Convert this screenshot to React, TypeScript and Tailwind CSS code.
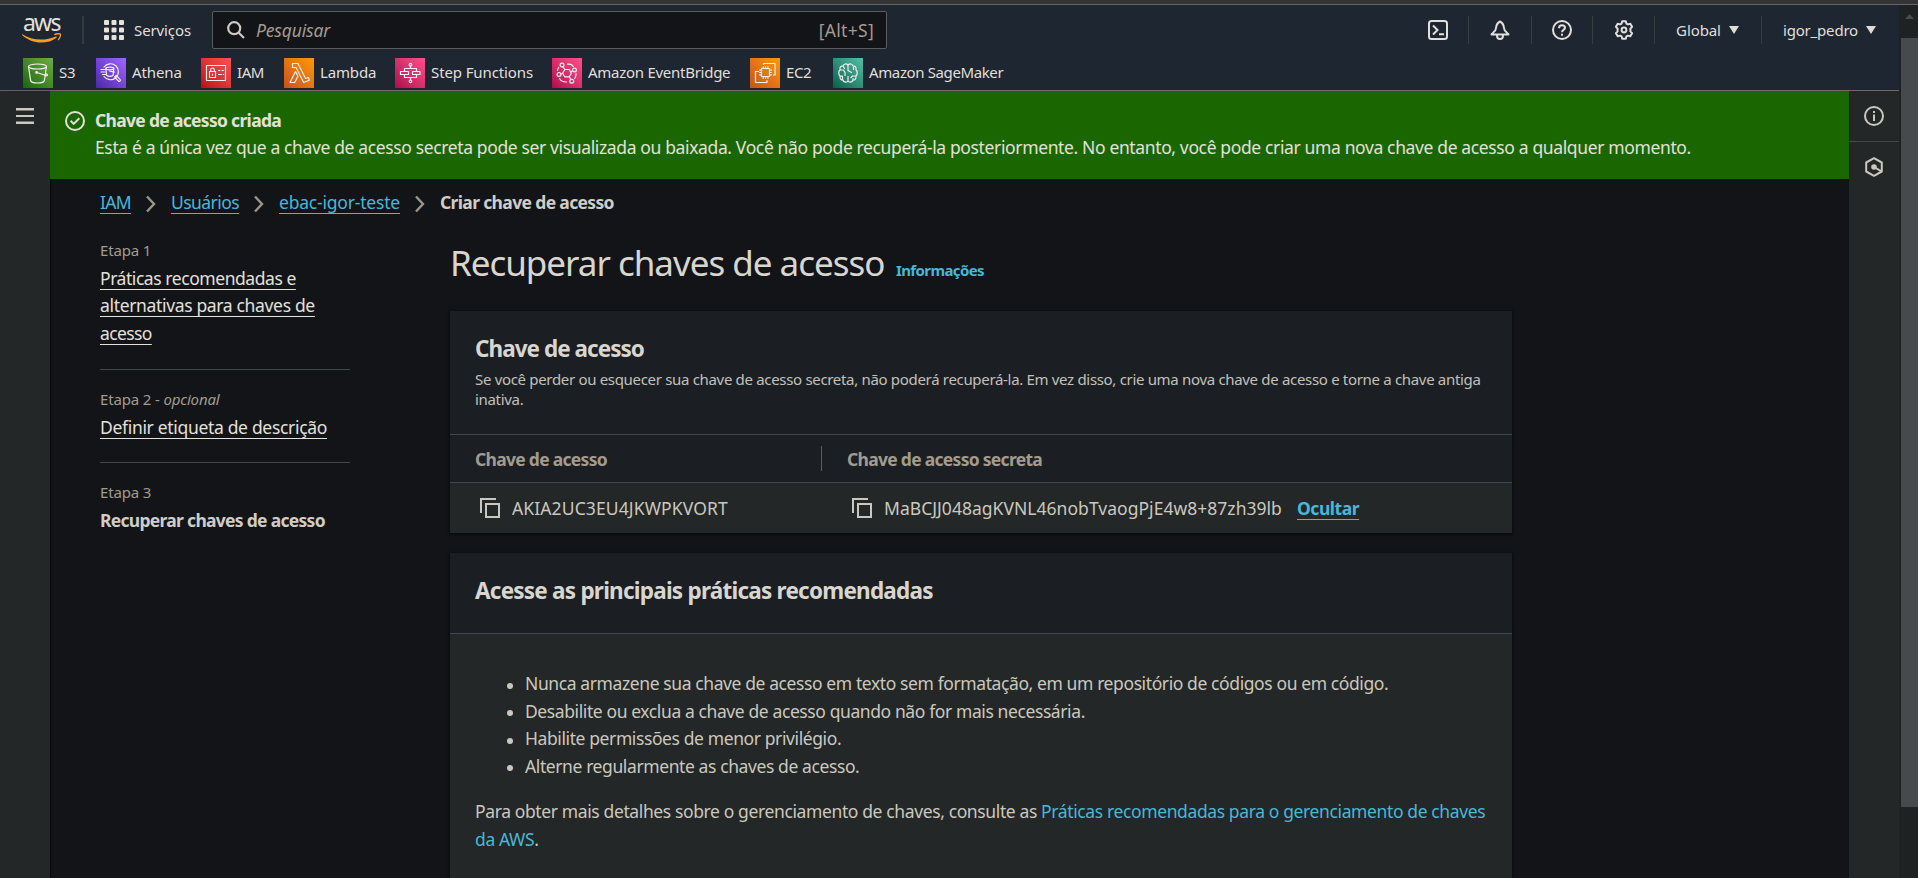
import type { ReactNode } from "react";

const outline = {
  fill: "none",
  stroke: "currentColor",
  strokeWidth: 1.2,
  strokeLinejoin: "round",
  strokeLinecap: "round",
} as const;

function AwsLogo() {
  return (
    <div className="flex h-[26px] w-10 shrink-0 flex-col">
      <span className="h-4 pl-px text-[23px] leading-[11px] tracking-[-1.8px] text-[#e4e1dc]">aws</span>
      <svg width="40" height="10" viewBox="0 0 40 10" className="shrink-0 text-[#ff9d1e]">
        <path d="M.3 1.300C5.500 4.600 12 6.600 18.800 6.600c5.200 0 10.500-1.100 15-3.100.9-.3 1.500.6.700 1.200C30.600 7.900 24.700 9.600 19.300 9.600 12 9.600 5.500 6.900.3 2.300c-.5-.6-.3-1.200 0-1z" fill="currentColor" />
        <path d="M32.200 1.700c2.200-1.200 5.800-1.100 6.200-.6.400.8-.4 4-2.300 5.900" fill="none" stroke="currentColor" strokeWidth="1.300" />
      </svg>
    </div>
  );
}

function GridIcon() {
  const p = [0, 7.5, 15];
  return (
    <svg width="20" height="20" viewBox="0 0 20 20" className="shrink-0 text-[#e6e2dc]">
      {p.map((y) => p.map((x) => <rect key={`${x}-${y}`} x={x} y={y} width="5" height="5" rx="1" fill="currentColor" />))}
    </svg>
  );
}

function Caret() {
  return (
    <svg width="10" height="8" viewBox="0 0 10 8" className="shrink-0 text-[#e0ddd7]">
      <path d="M0 0h10L5 8z" fill="currentColor" />
    </svg>
  );
}

function ServiceIcon({ bg, children }: { bg: string; children: ReactNode }) {
  return (
    <span className={`flex size-[30px] shrink-0 items-center justify-center text-[#f2efee] ${bg}`}>
      <svg width="30" height="30" viewBox="0 0 30 30" {...outline}>
        {children}
      </svg>
    </span>
  );
}

const favorites = [
  {
    name: "S3",
    box: "w-[73px]",
    text: "tracking-[-0.3px]",
    bg: "bg-linear-to-tr from-[#1b660f] to-[#6cae3e]",
    icon: (
      <>
        <ellipse cx="14.500" cy="8.500" rx="9" ry="2.500" />
        <path d="M5.500 8.500l2.200 14.300c.4 1.300 3 2.200 6.800 2.200s6.400-.9 6.800-2.200L23.500 8.500M14 14.500l9.500 3.300c1.800-.5 1-1.600-.900-2.600" />
        <circle cx="13.600" cy="14.400" r=".8" fill="currentColor" />
      </>
    ),
  },
  {
    name: "Athena",
    box: "w-[105px]",
    text: "tracking-[-0.1px]",
    bg: "bg-linear-to-tr from-[#4d27a8] to-[#a166ff]",
    icon: (
      <>
        <path d="M8 9a8 8 0 1 1 0 9.500M5 11.500h4M5 14h4M6.500 16.500h4" />
        <ellipse cx="13.800" cy="10.500" rx="4" ry="1.300" />
        <path d="M9.800 10.500l.8 6.800c1.500 1.400 5 1.400 6.500 0l.7-6.800M13.500 13l4.800 1.200M18.600 19l1.600-1.600 4 4.200c.7.700-.8 2.400-1.700 1.600z" />
      </>
    ),
  },
  {
    name: "IAM",
    box: "w-[83px]",
    text: "tracking-[-0.4px]",
    bg: "bg-linear-to-tr from-[#bd0816] to-[#ff5252]",
    icon: (
      <path d="M5.500 7.500h19v15h-19zM8.500 13.500h6v6h-6zM9.700 13.500v-1.700a1.800 1.800 0 0 1 3.600 0v1.700M11.500 16v1.200M17.500 12.500h1.500M21 12.500h1.500M17.500 16.500h3M22.300 16.500h.2" />
    ),
  },
  {
    name: "Lambda",
    box: "w-[111px]",
    text: "tracking-[-0.15px]",
    bg: "bg-linear-to-tr from-[#c8511b] to-[#ff9900]",
    icon: <path d="M8.500 5.500h5.500l7.500 15 3-1 .8 2.700-5.600 2.300L12 9.500H8.500zM11.500 13.500l2.400 4.700-3.200 6.300H6z" />,
  },
  {
    name: "Step Functions",
    box: "w-[157px]",
    text: "tracking-[-0.11px]",
    bg: "bg-linear-to-tr from-[#b0084d] to-[#ff4f8b]",
    icon: (
      <>
        <circle cx="15.500" cy="6.700" r="1.300" />
        <circle cx="15.500" cy="23.300" r="1.300" />
        <path d="M15.500 8v2.300M15.500 19.700V22M9.500 13.500v-3h12v3M9.500 16.500v3h12v-3M5.500 13.500h8v3h-8zM17.500 13.500h7.500v3h-7.500z" />
      </>
    ),
  },
  {
    name: "Amazon EventBridge",
    box: "w-[198px]",
    text: "tracking-[-0.27px]",
    bg: "bg-linear-to-tr from-[#b0084d] to-[#ff4f8b]",
    icon: (
      <>
        <path d="M12.800 11.500h4.400l2.200 3.700-2.200 3.700h-4.400l-2.200-3.700z" />
        <circle cx="10" cy="7" r="1.900" />
        <circle cx="22.500" cy="12" r="1.900" />
        <circle cx="7" cy="16.500" r="1.900" />
        <circle cx="19.800" cy="23.300" r="1.900" />
        <path d="M11 8.700l1.700 2.700M20.600 12.800l-1.500 1M9 16l1.300-.5M18.900 21.600l-1.500-2.600M15.500 6.200c2.500-.4 5 .6 6 2.600M6.700 9.500c-.8 1-1.200 2-1.200 3M7.500 20.500c1.300 2.500 4 3.500 7 3.500M24 15.500c.2 1.800-.4 3.500-1.300 5" />
      </>
    ),
  },
  {
    name: "EC2",
    box: "w-[83px]",
    text: "tracking-[-0.4px]",
    bg: "bg-linear-to-tr from-[#c8511b] to-[#ff9900]",
    icon: (
      <path d="M11.500 10.500h8v8h-8zM13.200 8.700v1.500M15.500 8.700v1.500M17.800 8.700v1.500M13.200 19v1.500M15.500 19v1.500M17.800 19v1.500M9.700 12.200h1.500M9.700 14.500h1.500M9.700 16.800h1.500M20 12.200h1.500M20 14.500h1.500M20 16.800h1.500M13.500 6.500v-1h11.500v11.500h-1.500M8.500 13.500h-3v11h11.500V22.500" />
    ),
  },
  {
    name: "Amazon SageMaker",
    box: "w-[180px]",
    text: "tracking-[-0.38px]",
    bg: "bg-linear-to-tr from-[#055f4e] to-[#56c0a7]",
    icon: (
      <path d="M15 7.200c-1.500-1.900-4.300-1.500-4.900.6-2.300-.1-3.700 1.900-3 4-1.800 1.600-1.800 4.800 0 6.400-.5 2.200.9 4 3 4 .7 2.200 3.500 2.700 4.900.8 1.400 1.900 4.200 1.400 4.900-.8 2.100 0 3.500-1.800 3-4 1.800-1.600 1.800-4.800 0-6.400.7-2.100-.7-4.100-3-4-.6-2.100-3.400-2.500-4.900-.6zM15 7.200v5.300l3.500 2M15 23v-4.500M10 8l1.500 2.500M7 12h3.500l1.500 2.500v3M7 18.200h2.500v3M20.500 9v2.500M23 18h-3.500l-1.500 1.500M20 22v-1.500" />
    ),
  },
];

function NavDivider({ className }: { className: string }) {
  return <span className={`h-7 w-px shrink-0 bg-[#353c42] ${className}`} />;
}

function Header() {
  return (
    <header className="h-[86px] shrink-0 border-b border-[#6f6a68] bg-[#1d2631] text-[15px] leading-5 text-[#e2dfda]">
      <div className="flex h-[50px] items-center pl-[22px]">
        <AwsLogo />
        <span className="ml-5 h-7 w-0.5 shrink-0 bg-[#353a40]" />
        <button className="ml-5 flex items-center gap-2.5">
          <GridIcon />
          <span className="w-[57px] tracking-[-0.11px]">Serviços</span>
        </button>
        <div className="ml-[21px] flex h-[38px] w-[675px] shrink-0 items-center rounded-[2px] border border-[#5b5c5e] bg-[#131418] pr-3 pl-3.5">
          <svg width="18" height="18" viewBox="0 0 18 18" fill="none" stroke="currentColor" strokeWidth="2.200" className="text-[#cdc9c2]">
            <circle cx="7.200" cy="7.200" r="6" />
            <path d="M11.500 11.500l5.500 5.500" />
          </svg>
          <span className="ml-[11px] pb-px text-[17.5px] tracking-[-0.16px] text-[#a39b8d] italic">Pesquisar</span>
          <span className="ml-auto pb-px text-[17.5px] tracking-[0.3px] text-[#a39b8d]">[Alt+S]</span>
        </div>
        <svg width="20" height="20" viewBox="0 0 20 20" fill="none" stroke="currentColor" strokeWidth="2" className="ml-[541px] shrink-0">
          <rect x="1" y="1" width="18" height="18" rx="2.500" />
          <path d="M5 5.500l4.500 4.500L5 14.500M11 14.200h5" />
        </svg>
        <NavDivider className="ml-5" />
        <svg width="20" height="20" viewBox="0 0 20 20" fill="none" stroke="currentColor" strokeWidth="2" strokeLinejoin="round" className="ml-[21px] shrink-0">
          <path d="M10 1.500C7.400 2.800 6.300 5 6 8c-.2 2.200-1 3.200-2.500 4.300L1.500 14.500h17l-2-2.200C15 11.200 14.200 10.200 14 8c-.3-3-1.400-5.200-4-6.500zM7 14.800v1c0 1.800 1.300 3.200 3 3.200s3-1.400 3-3.200v-1" />
        </svg>
        <NavDivider className="ml-[21px]" />
        <svg width="20" height="20" viewBox="0 0 20 20" fill="none" stroke="currentColor" strokeWidth="2" className="ml-5 shrink-0">
          <circle cx="10" cy="10" r="9" />
          <path d="M7 8.200C7 6.300 8.200 5.200 10 5.200s3 1 3 2.600c0 2-3 2.200-3 4.400M10 13.700v2" />
        </svg>
        <NavDivider className="ml-5" />
        <svg width="20" height="20" viewBox="0 0 20 20" fill="none" stroke="currentColor" strokeWidth="2" strokeLinejoin="round" className="ml-[21px] shrink-0">
          <path d="M8.200 1.200h3.600l.6 2.400 1.500.8 2.400-.7 1.800 3.100L16.400 8.600v2.800l1.700 1.800-1.800 3.100-2.400-.7-1.500.8-.6 2.400H8.200l-.6-2.400-1.500-.8-2.400.7-1.800-3.100 1.700-1.800V8.600L1.900 6.800l1.800-3.100 2.400.7 1.500-.8z" />
          <circle cx="10" cy="10" r="2.400" />
        </svg>
        <NavDivider className="ml-5" />
        <button className="ml-[22px] flex items-center gap-2">
          <span className="-ml-px w-[45px] tracking-[-0.1px]">Global</span>
          <Caret />
        </button>
        <NavDivider className="ml-[22px]" />
        <button className="ml-[21px] flex items-center gap-2">
          <span className="w-[75px] tracking-[-0.19px]">igor_pedro</span>
          <Caret />
        </button>
      </div>
      <nav className="flex pt-[3px] pl-[23px]">
        {favorites.map((f) => (
          <a key={f.name} className={`flex shrink-0 items-center gap-1.5 whitespace-nowrap ${f.box}`}>
            <ServiceIcon bg={f.bg}>{f.icon}</ServiceIcon>
            <span className={`pb-0.5 ${f.text}`}>{f.name}</span>
          </a>
        ))}
      </nav>
    </header>
  );
}

function Banner() {
  return (
    <div className="flex h-[88px] shrink-0 bg-[#1a6702] pt-4 pl-[15px] text-[17.5px] leading-[27px] whitespace-nowrap text-[#e2e0d9]">
      <svg width="20" height="20" viewBox="0 0 20 20" fill="none" stroke="currentColor" strokeWidth="2" className="mt-1 shrink-0">
        <circle cx="10" cy="10" r="9" />
        <path d="M5.600 9.800l3.100 3.100 5.600-5.700" />
      </svg>
      <div className="ml-2.5">
        <div className="font-bold tracking-[-0.69px]">Chave de acesso criada</div>
        <div className="tracking-[-0.367px]">
          Esta é a única vez que a chave de acesso secreta pode ser visualizada ou baixada. Você não pode recuperá-la posteriormente. No entanto, você pode criar uma nova chave de acesso a qualquer momento.
        </div>
      </div>
    </div>
  );
}

function Chevron() {
  return (
    <svg width="10" height="18" viewBox="0 0 10 18" fill="none" stroke="currentColor" strokeWidth="2.400" className="shrink-0 text-[#9d9588]">
      <path d="M1 1.500L8 9l-7 7.500" />
    </svg>
  );
}

function Breadcrumbs() {
  const link = "shrink-0 text-[#46b8d8] underline decoration-1 underline-offset-[4px] [text-decoration-skip-ink:none]";
  return (
    <nav className="flex h-6 items-center text-[17.5px] leading-6 whitespace-nowrap">
      <a className={`${link} w-[31px] tracking-[-0.67px]`}>IAM</a>
      <span className="ml-[15px] flex pt-[3px]"><Chevron /></span>
      <a className={`${link} ml-[15px] w-[68px] tracking-[-0.57px]`}>Usuários</a>
      <span className="ml-[15px] flex pt-[3px]"><Chevron /></span>
      <a className={`${link} ml-[15px] w-[121px] tracking-[-0.2px]`}>ebac-igor-teste</a>
      <span className="ml-[15px] flex pt-[3px]"><Chevron /></span>
      <span className="ml-[15px] font-bold tracking-[-0.65px] text-[#d0cdc6]">Criar chave de acesso</span>
    </nav>
  );
}

function Steps() {
  const label = "text-[15px] leading-5 tracking-[-0.15px] text-[#a39b8d]";
  const link = "text-[17.5px] leading-[27.5px] whitespace-nowrap text-[#e3e0da] underline decoration-1 underline-offset-[4px] [text-decoration-skip-ink:none]";
  return (
    <ol className="w-[250px] shrink-0">
      <li className="border-b border-[#414750] pb-[22px]">
        <div className={label}>Etapa 1</div>
        <div className={`mt-[4.5px] ${link}`}>
          <span className="tracking-[-0.44px]">Práticas recomendadas e</span>
          <br />
          <span className="tracking-[-0.34px]">alternativas para chaves de</span>
          <br />
          <span className="tracking-[-0.6px]">acesso</span>
        </div>
      </li>
      <li className="border-b border-[#414750] pt-[19px] pb-[21px]">
        <div className={label}>
          Etapa 2 - <i>opcional</i>
        </div>
        <div className={`mt-[4.5px] tracking-[-0.32px] ${link}`}>Definir etiqueta de descrição</div>
      </li>
      <li className="pt-[19px]">
        <div className={label}>Etapa 3</div>
        <div className="mt-[5px] text-[17.5px] leading-[27.5px] font-bold tracking-[-0.71px] whitespace-nowrap text-[#d0cdc6]">
          Recuperar chaves de acesso
        </div>
      </li>
    </ol>
  );
}

function CopyIcon() {
  return (
    <svg width="20" height="20" viewBox="0 0 20 20" fill="none" stroke="currentColor" strokeWidth="2" className="shrink-0">
      <path d="M1 15V1h15" />
      <rect x="6" y="6" width="13" height="13" />
    </svg>
  );
}

function KeyCard() {
  return (
    <section className="mt-[26px] bg-[#232727] shadow-[0_1px_2px_1px_rgba(0,0,0,0.5)]">
      <div className="h-[124px] border-b border-[#414750] bg-[#1b1f24] pt-[23.5px] pl-[25px] whitespace-nowrap">
        <h2 className="text-[22.5px] leading-7 font-bold tracking-[-0.96px] text-[#d9d6cf]">Chave de acesso</h2>
        <p className="mt-1.5 text-[15px] leading-5 tracking-[-0.32px] text-[#c4c0b8]">
          Se você perder ou esquecer sua chave de acesso secreta, não poderá recuperá-la. Em vez disso, crie uma nova chave de acesso e torne a chave antiga
          <br />
          inativa.
        </p>
      </div>
      <div className="flex h-12 items-center border-b border-[#414750] bg-[#1b1f24] text-[17.5px] leading-6 font-bold tracking-[-0.71px] text-[#a39b8d]">
        <div className="w-[371px] pl-[25px]">Chave de acesso</div>
        <div className="h-[25px] w-px bg-[#5f5c58]" />
        <div className="pl-[25px]">Chave de acesso secreta</div>
      </div>
      <div className="flex h-[50px] items-center text-[17.5px] leading-6 whitespace-nowrap text-[#cbc7bf]">
        <div className="flex w-[372px] items-center pl-[30px]">
          <CopyIcon />
          <span className="ml-3 pb-px tracking-[0.12px]">AKIA2UC3EU4JKWPKVORT</span>
        </div>
        <div className="flex items-center pl-[30px]">
          <CopyIcon />
          <span className="ml-3 w-[401px] pb-px tracking-[0.03px]">MaBCJJ048agKVNL46nobTvaogPjE4w8+87zh39lb</span>
          <a className="ml-3 pb-px font-bold tracking-[-0.48px] text-[#46b8d8] underline decoration-1 underline-offset-[4px]">Ocultar</a>
        </div>
      </div>
    </section>
  );
}

const practices = [
  "Nunca armazene sua chave de acesso em texto sem formatação, em um repositório de códigos ou em código.",
  "Desabilite ou exclua a chave de acesso quando não for mais necessária.",
  "Habilite permissões de menor privilégio.",
  "Alterne regularmente as chaves de acesso.",
];

function PracticesCard() {
  return (
    <section className="mt-5 h-[400px] bg-[#232727] shadow-[0_1px_2px_1px_rgba(0,0,0,0.5)]">
      <div className="h-[81px] border-b border-[#414750] bg-[#1b1f24] pt-[23.5px] pl-[25px]">
        <h2 className="text-[22.5px] leading-7 font-bold tracking-[-0.77px] text-[#d9d6cf]">Acesse as principais práticas recomendadas</h2>
      </div>
      <div className="pt-9 pl-[25px] text-[17.5px] leading-[27.5px] tracking-[-0.4px] whitespace-nowrap text-[#cbc7bf]">
        <ul>
          {practices.map((p) => (
            <li key={p} className="flex items-center pl-8">
              <span className="mt-1 mr-3 size-1.5 rounded-full bg-[#cbc7bf]" />
              {p}
            </li>
          ))}
        </ul>
        <p className="mt-[18px] tracking-[-0.38px]">
          Para obter mais detalhes sobre o gerenciamento de chaves, consulte as{" "}
          <a className="text-[#46b8d8]">
            Práticas recomendadas para o gerenciamento de chaves
            <br />
            da AWS
          </a>
          .
        </p>
      </div>
    </section>
  );
}

function ToolsRail() {
  return (
    <aside className="flex w-[50px] shrink-0 flex-col bg-[#232727] text-[#cbc7bf]">
      <div className="flex h-[51px] items-center justify-center border-b border-[#414750]">
        <svg width="20" height="20" viewBox="0 0 20 20" fill="none" stroke="currentColor" strokeWidth="2">
          <circle cx="10" cy="10" r="9" />
          <path d="M10 8.500V15M10 5v2" />
        </svg>
      </div>
      <div className="flex h-[50px] items-center justify-center">
        <svg width="20" height="20" viewBox="0 0 20 20" fill="none" stroke="currentColor" strokeWidth="2" strokeLinejoin="round">
          <path d="M10 1.200L17.800 5.500v9L10 18.800 2.200 14.500v-9z" />
          <circle cx="10" cy="10" r="2.800" fill="currentColor" stroke="none" />
          <path d="M10 10l7 4.200" />
        </svg>
      </div>
    </aside>
  );
}

export default function App() {
  return (
    <div className="flex h-[878px] w-[1918px] flex-col overflow-hidden bg-[#131418] font-['Noto_Sans',sans-serif]">
      <div className="h-[5px] shrink-0 border-b border-[#666666] bg-[#343434]" />
      <div className="flex min-h-0 flex-1">
        <div className="flex w-[1899px] shrink-0 flex-col">
          <Header />
          <div className="flex min-h-0 flex-1">
            <aside className="w-[50px] shrink-0 bg-[#232727] pt-[17px] pl-4 shadow-[1px_0_1px_rgba(0,0,0,0.5)]">
              <svg width="18" height="16" viewBox="0 0 18 16" className="text-[#cbc7bf]">
                <path d="M0 0h18v2.500H0zM0 7h18v2H0zM0 13.500h18V16H0z" fill="currentColor" />
              </svg>
            </aside>
            <main className="flex min-w-0 flex-1 flex-col">
              <Banner />
              <div className="pt-[11px] pl-[50px]">
                <Breadcrumbs />
                <div className="mt-[26px] flex">
                  <Steps />
                  <div className="ml-[100px] w-[1062px] shrink-0">
                    <div className="flex h-[45px] items-baseline pt-px whitespace-nowrap">
                      <h1 className="w-[436px] text-[35px] leading-[44px] tracking-[-1.02px] text-[#d9d6cf]">Recuperar chaves de acesso</h1>
                      <a className="ml-2.5 text-[15px] font-bold tracking-[-0.61px] text-[#46b8d8]">Informações</a>
                    </div>
                    <KeyCard />
                    <PracticesCard />
                  </div>
                </div>
              </div>
            </main>
            <ToolsRail />
          </div>
        </div>
        <div className="flex w-[19px] shrink-0 flex-col items-end bg-[#1e2222]">
          <div className="flex h-[33px] w-[17px] justify-center pt-[9px]">
            <svg width="9" height="5" viewBox="0 0 9 5" className="text-[#484c4e]">
              <path d="M0 5h9L4.500 0z" fill="currentColor" />
            </svg>
          </div>
          <div className="h-[769px] w-[17px] bg-[#474a4c]" />
        </div>
      </div>
    </div>
  );
}
